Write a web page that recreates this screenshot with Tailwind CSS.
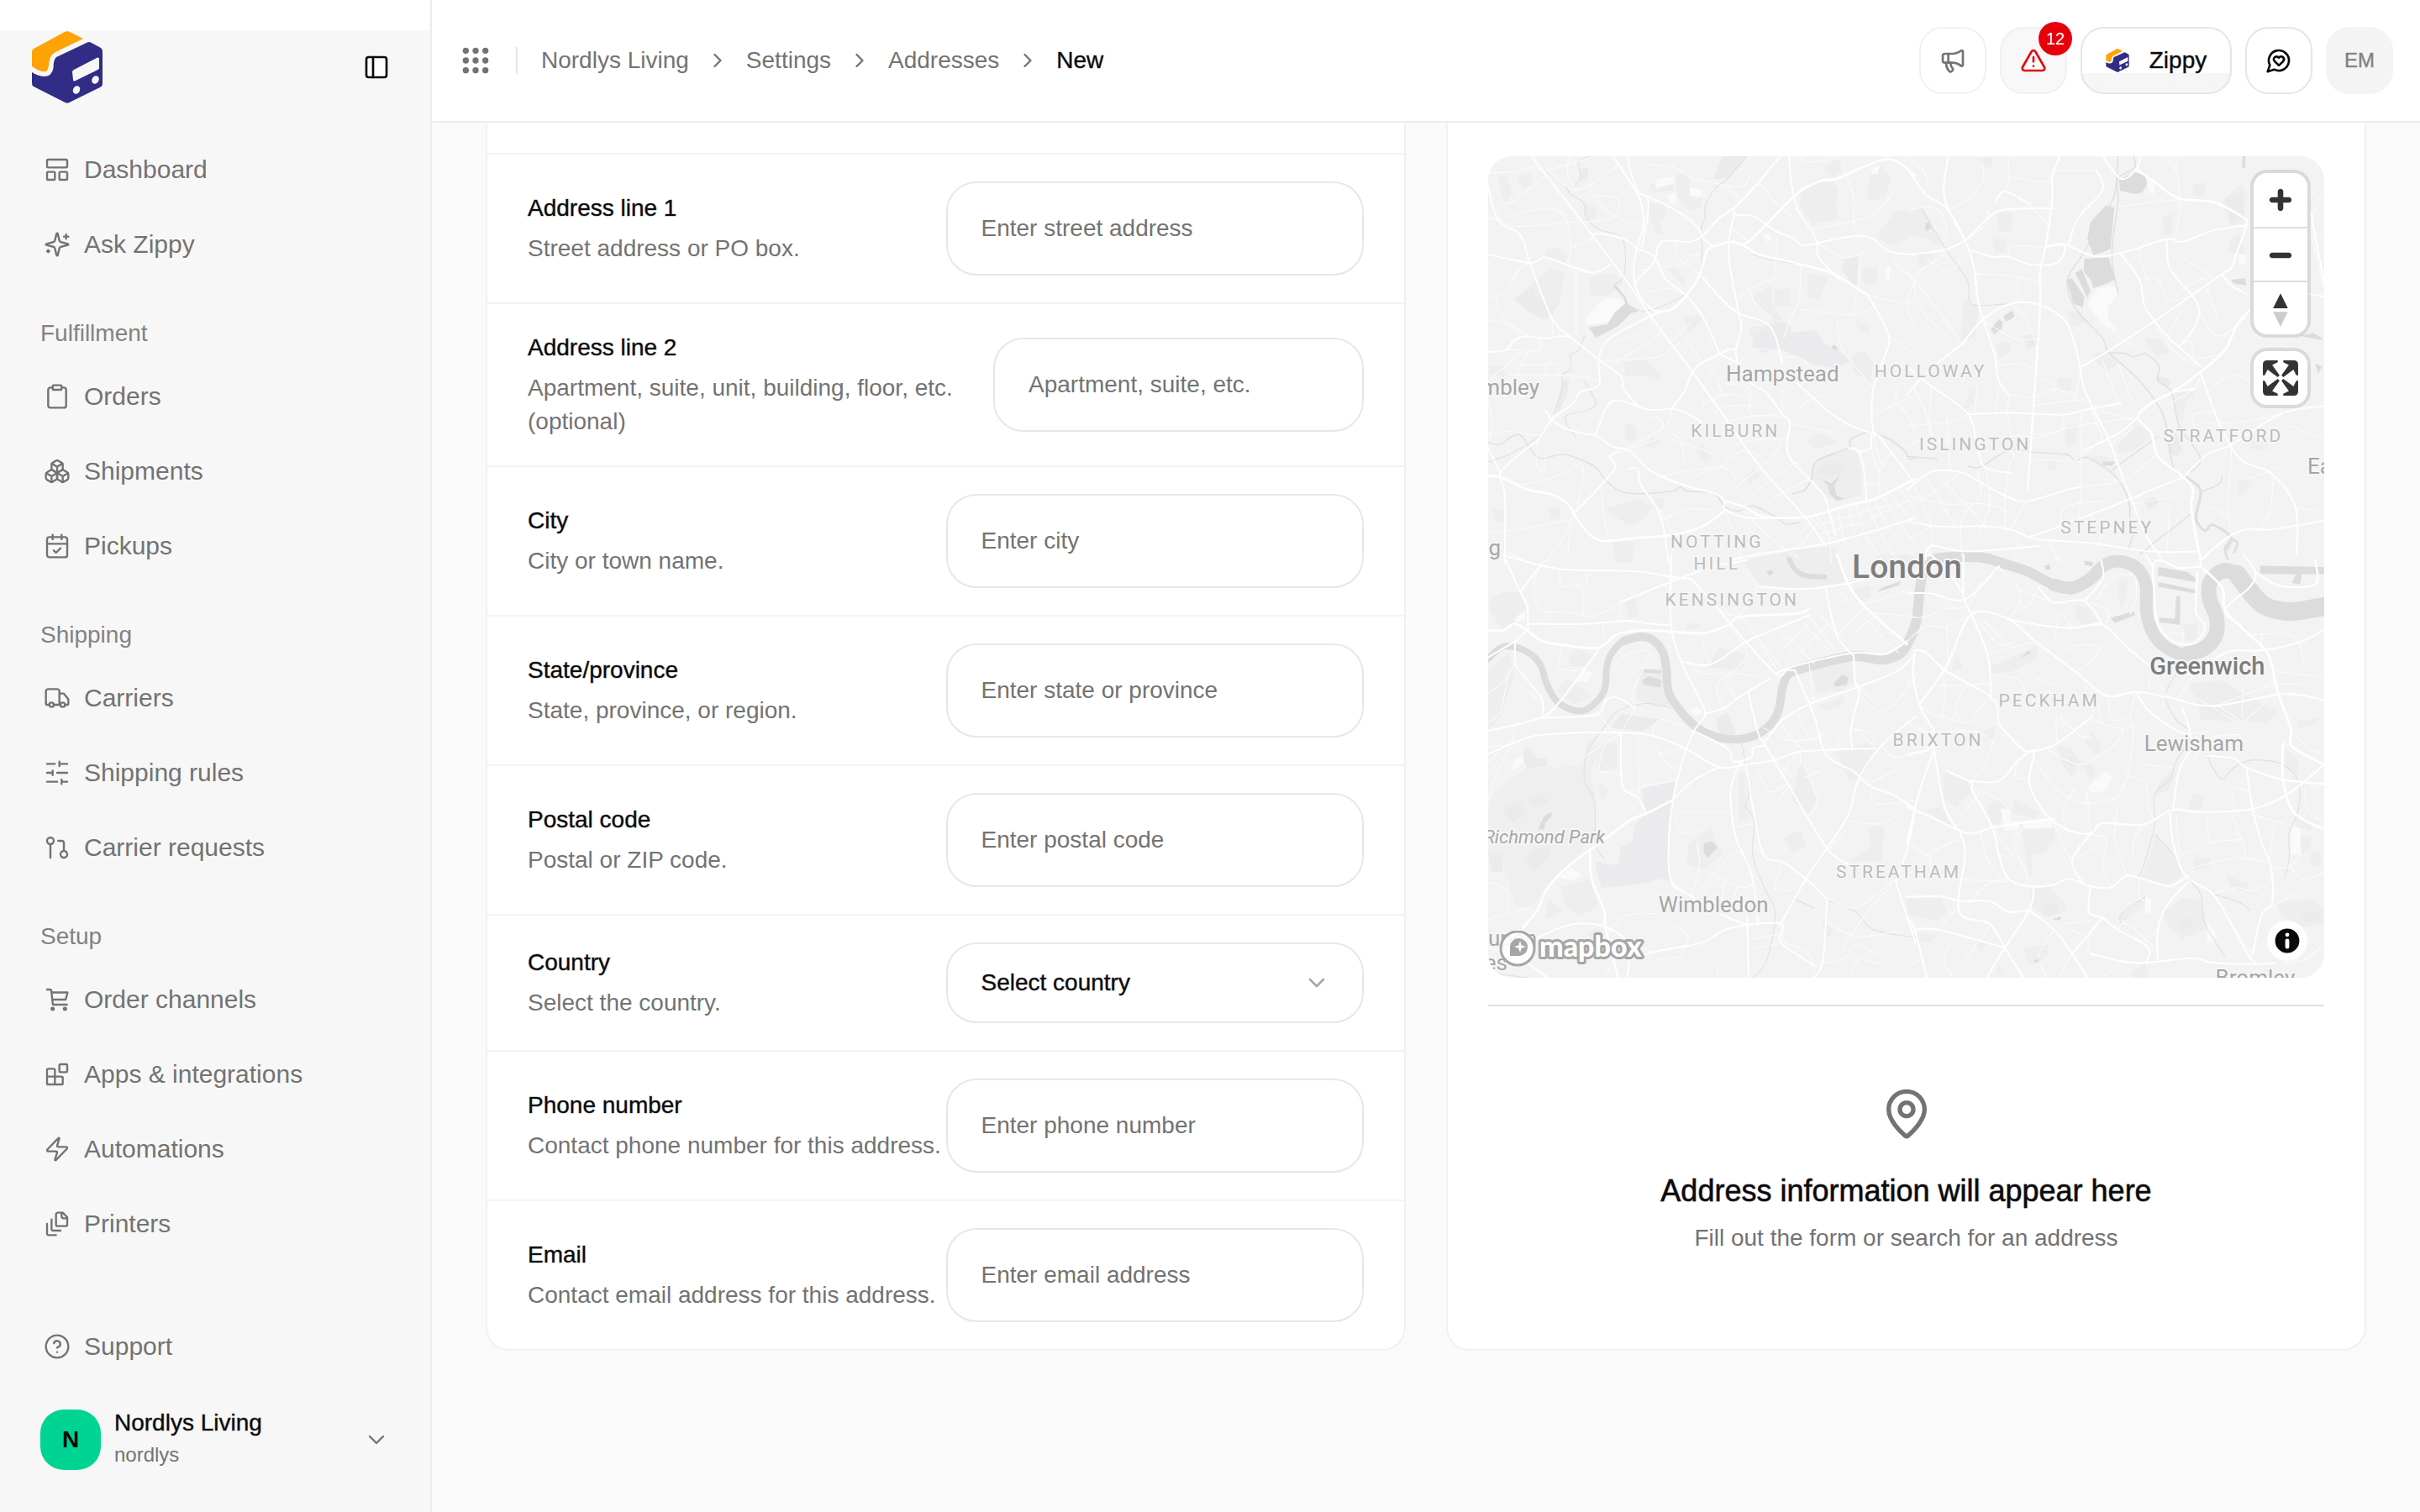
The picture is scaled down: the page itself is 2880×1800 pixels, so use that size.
<!DOCTYPE html>
<html lang="en">
<head>
<meta charset="utf-8">
<meta name="viewport" content="width=device-width, initial-scale=1">
<title>New address</title>
<script src="https://cdn.jsdelivr.net/npm/@tailwindcss/browser@4"></script>
</head>
<body class="flex h-screen overflow-hidden bg-[#fafafa] font-['Liberation_Sans',Arial,sans-serif] text-[28px] leading-10 text-[#737373]">

<svg class="hidden">
  <symbol id="logo" viewBox="0 0 84 86">
    <path fill="#ffa305" d="M3 20.500 39 1Q42-.5 45 1L61 9 28 25Q21 29 20.500 37L20 41Q19 50 12 48 5 46 0 42V25Q0 22 3 20.500Z"/>
    <path fill="#312c85" d="M29 31 66 13.500Q68 12.500 70 13.500L82 20Q84 21.500 84 24V63Q84 65.500 82 66.500L44 85.300Q42 86 40 85.300L2 66Q0 65 0 62V49Q7 53.500 14 54 24 54 25.500 44 25.500 34 29 31Z"/>
    <path fill="#f7f7f7" d="M48 48.500Q48 47 50 46L78 31.500Q80 31 80 33V44Q80 45 78.500 46L51 59.500Q49 60 49 58Z"/>
    <ellipse cx="53" cy="70" rx="4" ry="5" transform="rotate(30 53 70)" fill="#f7f7f7"/>
    <ellipse cx="75.500" cy="58" rx="4" ry="5" transform="rotate(30 75.500 58)" fill="#f7f7f7"/>
  </symbol>
</svg>

<aside class="flex w-[514px] shrink-0 flex-col border-r-2 border-[#ececec] bg-[#f7f7f7]">
  <div class="h-9 shrink-0 bg-white"></div>
  <div class="flex h-22 shrink-0 items-center justify-between pr-12 pl-[38px]">
    <a href="#" aria-label="Home"><svg class="h-[86px] w-[84px]"><use href="#logo"/></svg></a>
    <button type="button" aria-label="Toggle sidebar" class="text-[#0a0a0a]">
      <svg class="size-8" viewBox="0 0 24 24" fill="none" stroke="currentColor" stroke-width="2" stroke-linecap="round" stroke-linejoin="round"><rect width="18" height="18" x="3" y="3" rx="2" fill="#fff"/><path d="M9 3v18"/></svg>
    </button>
  </div>

  <nav class="mt-[38px] flex flex-col gap-[31px] px-8 text-[30px]">
    <div class="flex flex-col gap-[9px]">
      <a href="#" class="flex h-20 items-center gap-4 px-5"><svg class="size-8" viewBox="0 0 24 24" fill="none" stroke="currentColor" stroke-width="1.8" stroke-linecap="round" stroke-linejoin="round"><rect width="18" height="7" x="3" y="3" rx="1"/><rect width="7" height="7" x="3" y="14" rx="1"/><rect width="7" height="7" x="14" y="14" rx="1"/></svg>Dashboard</a>
      <a href="#" class="flex h-20 items-center gap-4 px-5"><svg class="size-8" viewBox="0 0 24 24" fill="none" stroke="currentColor" stroke-width="1.8" stroke-linecap="round" stroke-linejoin="round"><path d="M9.937 15.500A2 2 0 0 0 8.500 14.063l-6.135-1.582a.5.5 0 0 1 0-.962L8.500 9.936A2 2 0 0 0 9.937 8.500l1.582-6.135a.5.5 0 0 1 .963 0L14.063 8.500A2 2 0 0 0 15.500 9.937l6.135 1.581a.5.5 0 0 1 0 .964L15.500 14.063a2 2 0 0 0-1.437 1.437l-1.582 6.135a.5.5 0 0 1-.963 0z"/><path d="M20 3v4M22 5h-4M4 17v2M5 18H3"/></svg>Ask Zippy</a>
    </div>
    <div class="flex flex-col gap-[9px]">
      <h2 class="-mb-[9px] flex h-[70px] items-center pl-4 text-[28px] text-[#828282]">Fulfillment</h2>
      <a href="#" class="flex h-20 items-center gap-4 px-5"><svg class="size-8" viewBox="0 0 24 24" fill="none" stroke="currentColor" stroke-width="1.8" stroke-linecap="round" stroke-linejoin="round"><rect width="8" height="4" x="8" y="2" rx="1"/><path d="M16 4h2a2 2 0 0 1 2 2v14a2 2 0 0 1-2 2H6a2 2 0 0 1-2-2V6a2 2 0 0 1 2-2h2"/></svg>Orders</a>
      <a href="#" class="flex h-20 items-center gap-4 px-5"><svg class="size-8" viewBox="0 0 24 24" fill="none" stroke="currentColor" stroke-width="1.8" stroke-linecap="round" stroke-linejoin="round"><path d="M2.970 12.920A2 2 0 0 0 2 14.630v3.240a2 2 0 0 0 .970 1.710l3 1.800a2 2 0 0 0 2.060 0L12 19v-5.500l-5-3-4.030 2.420Z"/><path d="m7 16.500-4.740-2.850M7 16.500l5-3M7 16.500v5.170"/><path d="M12 13.500V19l3.970 2.380a2 2 0 0 0 2.060 0l3-1.800a2 2 0 0 0 .970-1.710v-3.240a2 2 0 0 0-.970-1.710L17 10.500l-5 3Z"/><path d="m17 16.500-5-3M17 16.500l4.740-2.850M17 16.500v5.170"/><path d="M7.970 4.420A2 2 0 0 0 7 6.130v4.370l5 3 5-3V6.130a2 2 0 0 0-.970-1.710l-3-1.800a2 2 0 0 0-2.060 0l-3 1.800Z"/><path d="M12 8 7.260 5.150M12 8l4.740-2.850M12 13.500V8"/></svg>Shipments</a>
      <a href="#" class="flex h-20 items-center gap-4 px-5"><svg class="size-8" viewBox="0 0 24 24" fill="none" stroke="currentColor" stroke-width="1.8" stroke-linecap="round" stroke-linejoin="round"><path d="M8 2v4M16 2v4"/><rect width="18" height="18" x="3" y="4" rx="2"/><path d="M3 10h18M9 16l2 2 4-4"/></svg>Pickups</a>
    </div>
    <div class="flex flex-col gap-[9px]">
      <h2 class="-mb-[9px] flex h-[70px] items-center pl-4 text-[28px] text-[#828282]">Shipping</h2>
      <a href="#" class="flex h-20 items-center gap-4 px-5"><svg class="size-8" viewBox="0 0 24 24" fill="none" stroke="currentColor" stroke-width="1.8" stroke-linecap="round" stroke-linejoin="round"><path d="M14 18V6a2 2 0 0 0-2-2H4a2 2 0 0 0-2 2v11a1 1 0 0 0 1 1h2M15 18H9M19 18h2a1 1 0 0 0 1-1v-3.650a1 1 0 0 0-.220-.624l-3.480-4.350A1 1 0 0 0 17.520 8H14"/><circle cx="17" cy="18" r="2"/><circle cx="7" cy="18" r="2"/></svg>Carriers</a>
      <a href="#" class="flex h-20 items-center gap-4 px-5"><svg class="size-8" viewBox="0 0 24 24" fill="none" stroke="currentColor" stroke-width="1.8" stroke-linecap="round" stroke-linejoin="round"><path d="M21 4h-7M10 4H3M21 12h-9M8 12H3M21 20h-5M12 20H3M14 2v4M8 10v4M16 18v4"/></svg>Shipping rules</a>
      <a href="#" class="flex h-20 items-center gap-4 px-5"><svg class="size-8" viewBox="0 0 24 24" fill="none" stroke="currentColor" stroke-width="1.8" stroke-linecap="round" stroke-linejoin="round"><circle cx="18" cy="18" r="3"/><circle cx="6" cy="6" r="3"/><path d="M13 6h3a2 2 0 0 1 2 2v7M6 9v12"/></svg>Carrier requests</a>
    </div>
    <div class="flex flex-col gap-[9px]">
      <h2 class="-mb-[9px] flex h-[70px] items-center pl-4 text-[28px] text-[#828282]">Setup</h2>
      <a href="#" class="flex h-20 items-center gap-4 px-5"><svg class="size-8" viewBox="0 0 24 24" fill="none" stroke="currentColor" stroke-width="1.8" stroke-linecap="round" stroke-linejoin="round"><path d="M3 3h2.600q1.100 0 1.200 1L8.200 16.500h12.600M7 5.600h14.300l-1.700 6.400H7.700"/><circle cx="8" cy="20.300" r="1" fill="currentColor"/><circle cx="19" cy="20.300" r="1" fill="currentColor"/></svg>Order channels</a>
      <a href="#" class="flex h-20 items-center gap-4 px-5"><svg class="size-8" viewBox="0 0 24 24" fill="none" stroke="currentColor" stroke-width="1.8" stroke-linecap="round" stroke-linejoin="round"><rect width="7" height="7" x="14" y="3" rx="1"/><path d="M10 21V8a1 1 0 0 0-1-1H4a1 1 0 0 0-1 1v12a1 1 0 0 0 1 1h12a1 1 0 0 0 1-1v-5a1 1 0 0 0-1-1H3"/></svg>Apps &amp; integrations</a>
      <a href="#" class="flex h-20 items-center gap-4 px-5"><svg class="size-8" viewBox="0 0 24 24" fill="none" stroke="currentColor" stroke-width="1.8" stroke-linecap="round" stroke-linejoin="round"><path d="M4 14a1 1 0 0 1-.780-1.630l9.900-10.200a.5.5 0 0 1 .860.460l-1.920 6.020A1 1 0 0 0 13 10h7a1 1 0 0 1 .780 1.630l-9.900 10.200a.5.5 0 0 1-.860-.460l1.920-6.020A1 1 0 0 0 11 14z"/></svg>Automations</a>
      <a href="#" class="flex h-20 items-center gap-4 px-5"><svg class="size-8" viewBox="0 0 24 24" fill="none" stroke="currentColor" stroke-width="1.8" stroke-linecap="round" stroke-linejoin="round"><path d="M21 7h-3a2 2 0 0 1-2-2V2"/><path d="M21 6v6.500c0 .8-.7 1.500-1.500 1.500h-7c-.8 0-1.500-.7-1.500-1.500v-9c0-.8.7-1.500 1.500-1.500H17Z"/><path d="M7 8v8.800c0 .3.2.6.4.8.2.2.5.4.8.4H15M3 12v8.800c0 .3.2.6.4.8.2.2.5.4.8.4H11"/></svg>Printers</a>
    </div>
  </nav>

  <div class="mt-auto flex flex-col gap-[33px] pb-12">
    <a href="#" class="mx-8 flex h-20 items-center gap-4 px-5 text-[30px]"><svg class="size-8" viewBox="0 0 24 24" fill="none" stroke="currentColor" stroke-width="1.8" stroke-linecap="round" stroke-linejoin="round"><circle cx="12" cy="12" r="10"/><path d="M9.090 9a3 3 0 0 1 5.830 1c0 2-3 3-3 3M12 17h.010"/></svg>Support</a>
    <button type="button" class="flex items-center gap-4 px-12 text-left">
      <span class="flex size-18 items-center justify-center rounded-[28px] bg-[#00d492] font-bold text-[#0a0a0a]">N</span>
      <span class="flex-1">
        <span class="block leading-9 text-[#0a0a0a] [-webkit-text-stroke:1px_rgb(10_10_10/0.4)]">Nordlys Living</span>
        <span class="block text-2xl leading-10">nordlys</span>
      </span>
      <svg class="size-8" viewBox="0 0 24 24" fill="none" stroke="currentColor" stroke-width="1.8" stroke-linecap="round" stroke-linejoin="round"><path d="m6 9 6 6 6-6"/></svg>
    </button>
  </div>
</aside>

<div class="flex min-w-0 flex-1 flex-col">
  <header class="flex h-[146px] shrink-0 items-center justify-between border-b-2 border-[#ececec] bg-white pr-8 pl-8">
    <div class="flex items-center">
      <button type="button" aria-label="Apps"><svg class="size-10" viewBox="0 0 24 24" fill="currentColor"><circle cx="5" cy="5" r="2.200"/><circle cx="12" cy="5" r="2.200"/><circle cx="19" cy="5" r="2.200"/><circle cx="5" cy="12" r="2.200"/><circle cx="12" cy="12" r="2.200"/><circle cx="19" cy="12" r="2.200"/><circle cx="5" cy="19" r="2.200"/><circle cx="12" cy="19" r="2.200"/><circle cx="19" cy="19" r="2.200"/></svg></button>
      <div class="mx-7 h-8 w-[2px] bg-[#e5e5e5]"></div>
      <nav aria-label="Breadcrumb" class="flex items-center gap-5">
        <a href="#">Nordlys Living</a>
        <svg class="size-7" viewBox="0 0 24 24" fill="none" stroke="currentColor" stroke-width="2" stroke-linecap="round" stroke-linejoin="round"><path d="m9 18 6-6-6-6"/></svg>
        <a href="#">Settings</a>
        <svg class="size-7" viewBox="0 0 24 24" fill="none" stroke="currentColor" stroke-width="2" stroke-linecap="round" stroke-linejoin="round"><path d="m9 18 6-6-6-6"/></svg>
        <a href="#">Addresses</a>
        <svg class="size-7" viewBox="0 0 24 24" fill="none" stroke="currentColor" stroke-width="2" stroke-linecap="round" stroke-linejoin="round"><path d="m9 18 6-6-6-6"/></svg>
        <span aria-current="page" class="text-[#0a0a0a] [-webkit-text-stroke:1px_rgb(10_10_10/0.4)]">New</span>
      </nav>
    </div>
    <div class="flex items-center gap-4">
      <button type="button" aria-label="Announcements" class="flex size-20 items-center justify-center rounded-[28px] border-2 border-[#f1f1f1]"><svg class="size-8" viewBox="0 0 24 24" fill="none" stroke="currentColor" stroke-width="2" stroke-linecap="round" stroke-linejoin="round"><path d="M11 6a13 13 0 0 0 8.400-2.800A1 1 0 0 1 21 4v12a1 1 0 0 1-1.600.8A13 13 0 0 0 11 14H5a2 2 0 0 1-2-2V8a2 2 0 0 1 2-2z"/><path d="M6 14a12 12 0 0 0 2.400 7.200 2 2 0 0 0 3.200-2.400A8 8 0 0 1 10 14M8 6v8"/></svg></button>
      <button type="button" aria-label="Alerts" class="relative flex size-20 items-center justify-center rounded-[28px] border-2 border-[#f1f1f1] bg-[#f8f8f8] text-[#e7000b]">
        <svg class="size-8" viewBox="0 0 24 24" fill="none" stroke="currentColor" stroke-width="2" stroke-linecap="round" stroke-linejoin="round"><path fill="#fff" d="m21.730 18-8-14a2 2 0 0 0-3.480 0l-8 14A2 2 0 0 0 4 21h16a2 2 0 0 0 1.730-3"/><path d="M12 9v4M12 17h.010"/></svg>
        <span class="absolute -top-2 -right-2 flex size-10 items-center justify-center rounded-full bg-[#e7000b] text-xl text-white">12</span>
      </button>
      <button type="button" class="flex h-20 w-[180px] items-center justify-center gap-6 rounded-[28px] border-2 border-[#e5e5ea] bg-linear-to-b from-white from-70% to-[#f6f6f6] to-70% text-[#0a0a0a]"><svg class="size-7"><use href="#logo"/></svg><span class="[-webkit-text-stroke:1px_rgb(10_10_10/0.4)]">Zippy</span></button>
      <button type="button" aria-label="Feedback" class="flex size-20 items-center justify-center rounded-[28px] border-2 border-[#e5e5ea] text-[#0a0a0a]"><svg class="size-8" viewBox="0 0 24 24" fill="none" stroke="currentColor" stroke-width="2" stroke-linecap="round" stroke-linejoin="round"><path d="M7.900 20A9 9 0 1 0 4 16.100L2 22Z"/><path d="M15.800 9.200a2.500 2.500 0 0 0-3.500 0l-.3.4-.350-.3a2.420 2.420 0 1 0-3.200 3.600l3.600 3.500 3.600-3.500c1.200-1.200 1.100-2.700.2-3.700"/></svg></button>
      <button type="button" aria-label="Account" class="flex size-20 items-center justify-center rounded-[28px] bg-[#f4f4f4] text-2xl text-[#808080] [-webkit-text-stroke:1px_rgb(128_128_128/0.4)]">EM</button>
    </div>
  </header>

  <main class="grid grid-cols-2 items-stretch gap-12 px-16">
    <form class="flex flex-col rounded-b-[28px] border-2 border-t-0 border-[#f1f1f1] bg-white pt-9">
      <div class="flex items-center border-t-2 border-[#f3f3f3] px-12 py-8">
        <div class="flex w-1/2 flex-col gap-2"><label for="line1" class="text-[#0a0a0a] [-webkit-text-stroke:1px_rgb(10_10_10/0.4)]">Address line 1</label><p>Street address or PO box.</p></div>
        <input id="line1" placeholder="Enter street address" class="h-28 w-1/2 rounded-[36px] border-2 border-[#e7e7eb] px-10 placeholder:text-[#737373]">
      </div>
      <div class="flex items-center justify-between border-t-2 border-[#f3f3f3] px-12 py-8">
        <div class="flex flex-1 flex-col gap-2"><label for="line2" class="text-[#0a0a0a] [-webkit-text-stroke:1px_rgb(10_10_10/0.4)]">Address line 2</label><p>Apartment, suite, unit, building, floor, etc. (optional)</p></div>
        <input id="line2" placeholder="Apartment, suite, etc." class="h-28 w-[441px] rounded-[36px] border-2 border-[#e7e7eb] px-10 placeholder:text-[#737373]">
      </div>
      <div class="flex items-center border-t-2 border-[#f3f3f3] px-12 py-8">
        <div class="flex w-1/2 flex-col gap-2"><label for="city" class="text-[#0a0a0a] [-webkit-text-stroke:1px_rgb(10_10_10/0.4)]">City</label><p>City or town name.</p></div>
        <input id="city" placeholder="Enter city" class="h-28 w-1/2 rounded-[36px] border-2 border-[#e7e7eb] px-10 placeholder:text-[#737373]">
      </div>
      <div class="flex items-center border-t-2 border-[#f3f3f3] px-12 py-8">
        <div class="flex w-1/2 flex-col gap-2"><label for="state" class="text-[#0a0a0a] [-webkit-text-stroke:1px_rgb(10_10_10/0.4)]">State/province</label><p>State, province, or region.</p></div>
        <input id="state" placeholder="Enter state or province" class="h-28 w-1/2 rounded-[36px] border-2 border-[#e7e7eb] px-10 placeholder:text-[#737373]">
      </div>
      <div class="flex items-center border-t-2 border-[#f3f3f3] px-12 py-8">
        <div class="flex w-1/2 flex-col gap-2"><label for="postal" class="text-[#0a0a0a] [-webkit-text-stroke:1px_rgb(10_10_10/0.4)]">Postal code</label><p>Postal or ZIP code.</p></div>
        <input id="postal" placeholder="Enter postal code" class="h-28 w-1/2 rounded-[36px] border-2 border-[#e7e7eb] px-10 placeholder:text-[#737373]">
      </div>
      <div class="flex items-center border-t-2 border-[#f3f3f3] px-12 py-8">
        <div class="flex w-1/2 flex-col gap-2"><label for="country" class="text-[#0a0a0a] [-webkit-text-stroke:1px_rgb(10_10_10/0.4)]">Country</label><p>Select the country.</p></div>
        <div class="relative w-1/2">
          <select id="country" class="h-24 w-full appearance-none rounded-[36px] border-2 border-[#e7e7eb] bg-white px-10 text-[#0a0a0a] [-webkit-text-stroke:1px_rgb(10_10_10/0.4)]"><option>Select country</option></select>
          <svg class="pointer-events-none absolute top-8 right-10 size-8 text-[#a8a8a8]" viewBox="0 0 24 24" fill="none" stroke="currentColor" stroke-width="2" stroke-linecap="round" stroke-linejoin="round"><path d="m6 9 6 6 6-6"/></svg>
        </div>
      </div>
      <div class="flex items-center border-t-2 border-[#f3f3f3] px-12 py-8">
        <div class="flex w-1/2 flex-col gap-2"><label for="phone" class="text-[#0a0a0a] [-webkit-text-stroke:1px_rgb(10_10_10/0.4)]">Phone number</label><p>Contact phone number for this address.</p></div>
        <input id="phone" type="tel" placeholder="Enter phone number" class="h-28 w-1/2 rounded-[36px] border-2 border-[#e7e7eb] px-10 placeholder:text-[#737373]">
      </div>
      <div class="flex items-center border-t-2 border-[#f3f3f3] px-12 py-8">
        <div class="flex w-1/2 flex-col gap-2"><label for="email" class="text-[#0a0a0a] [-webkit-text-stroke:1px_rgb(10_10_10/0.4)]">Email</label><p>Contact email address for this address.</p></div>
        <input id="email" type="email" placeholder="Enter email address" class="h-28 w-1/2 rounded-[36px] border-2 border-[#e7e7eb] px-10 placeholder:text-[#737373]">
      </div>
    </form>

    <section class="flex flex-col gap-8 rounded-b-[28px] border-2 border-t-0 border-[#f1f1f1] bg-white px-12 pt-10">
      <div class="relative h-[978px] overflow-hidden rounded-[28px] bg-[#f3f3f3]">
        <svg class="size-full" viewBox="0 0 994 978" preserveAspectRatio="xMidYMid slice" role="img" aria-label="Map of London">
          <!-- parks and built-up blocks -->
          <g fill="#eeeeee">
            <g transform="translate(-12 -16) scale(.3333)">
              <path d="M72 112 100 120 122 180 100 215 82 175ZM145 120 185 108 195 150 160 165 143 145ZM610 215 665 225 670 260 645 280 660 325 640 330 610 270ZM700 120 745 110 760 160 800 200 790 235 745 240 710 190ZM610 150 690 135 700 170 630 180ZM1150 170 1180 145 1270 140 1285 170 1275 230 1290 275 1190 290 1150 230ZM1240 80 1290 60 1295 100 1275 125 1240 105ZM1400 110 1440 85 1475 125 1450 195 1400 210 1385 190ZM130 560 220 480 260 450 310 470 290 580 250 615 180 590ZM240 385 275 372 320 405 310 430 245 410ZM395 480 480 465 520 500 470 545 400 550ZM1180 470 1250 480 1215 565 1175 550ZM1055 525 1110 520 1115 580 1060 590ZM980 550 1045 510 1050 580 1085 630 1060 640 1010 600ZM730 610 760 625 790 618 800 635 750 682ZM680 455 705 445 740 490 735 515ZM960 660 1040 650 1050 700 980 710ZM520 785 590 772 650 820 645 845 590 830 525 835ZM1350 645 1400 650 1395 680 1360 670ZM1370 450 1425 445 1420 510 1370 500ZM1430 320 1490 245 1560 240 1560 320 1490 370 1425 345ZM525 1005 560 1010 570 1050 545 1072 525 1060ZM595 1080 620 1050 650 1065 630 1095ZM775 1095 800 1080 830 1130 805 1145ZM945 1190 985 1165 1010 1190 975 1218ZM450 1310 570 1270 625 1300 590 1345 540 1368ZM630 1265 665 1270 660 1310 625 1300ZM1170 1070 1210 1035 1290 1070 1210 1092ZM1195 1150 1220 1130 1320 1092 1355 1110 1368 1180 1365 1260 1290 1282 1230 1260 1195 1200ZM55 1310 90 1310 92 1350 60 1355ZM255 1305 290 1300 295 1340 262 1348ZM36 800 90 800 95 835 36 830ZM480 1425 555 1425 550 1500 490 1500ZM380 215 430 245 405 280 380 255ZM1330 760 1380 740 1410 790 1400 855 1340 820ZM905 1500 1130 1455 1270 1440 1290 1500Z"/>
            </g>
            <g transform="translate(498 -16) scale(.3635 .3333)">
              <path d="M235 55 280 50 278 90 240 85ZM0 250 50 235 90 310 110 370 60 340 0 330ZM295 250 345 250 340 320 300 320ZM280 345 325 345 325 390 285 395ZM935 150 975 143 972 195 935 190ZM835 265 870 255 865 330 840 330ZM185 560 235 590 225 690 175 715ZM290 725 330 710 345 745 300 770ZM600 760 660 740 690 790 650 820ZM780 700 830 700 860 750 820 765 785 730ZM490 840 540 840 535 885 500 885ZM205 885 225 880 220 930 185 960ZM525 1010 560 1005 550 1070 525 1090 515 1040ZM690 1080 750 1010 800 1030 790 1060 740 1100 690 1110ZM580 1120 650 1120 680 1150 640 1160ZM1125 1065 1175 1070 1185 1095 1125 1095ZM1085 1210 1110 1200 1130 1215 1100 1260 1080 1255ZM875 890 935 890 940 905 910 920 905 990 885 1000ZM465 1130 490 1135 490 1165 465 1170ZM1030 210 1090 150 1110 180 1100 290 1060 300ZM1060 340 1090 330 1105 400 1050 390ZM645 610 680 660 650 650ZM40 390 85 400 80 440 40 445ZM520 600 560 600 590 640 540 660Z"/>
            </g>
            <g transform="translate(-12 474) scale(.3333 .3444)">
              <path fill="#efefef" d="M60 820 165 740 365 730 375 700 395 640 450 670 400 740 415 830 420 960 330 1070 250 1140 200 1205 140 1222 90 1070 36 1040 36 880Z"/>
              <path d="M42 150 100 128 150 130 172 185 160 215 85 258 42 195ZM36 400 110 340 130 420 80 560 36 610ZM950 25 1260 0 1310 60 1300 98 1150 118 1000 108ZM1330 120 1400 110 1400 150 1350 160ZM1190 390 1335 365 1340 440 1300 470 1210 480ZM575 400 660 390 690 520 640 530 565 500ZM320 350 360 325 410 350 390 390 330 385ZM280 470 320 430 410 490 340 520ZM435 660 495 645 495 740 425 750ZM295 1150 400 1120 430 1210 370 1250 310 1220ZM750 1000 830 940 850 1000 880 1030 800 1090 745 1070ZM1140 740 1160 720 1210 840 1180 900 1120 850ZM1280 680 1400 650 1430 670 1360 780 1320 780ZM1090 980 1150 950 1170 1010 1120 1030ZM1390 940 1450 935 1440 1060 1320 1060 1400 1010ZM860 320 960 350 940 400 820 390ZM520 160 560 150 575 210 540 220ZM1220 520 1310 490 1300 520 1240 540ZM930 760 950 750 960 920 930 920ZM250 1190 310 1230 240 1260ZM430 780 470 820 440 850ZM740 240 790 235 790 260 740 260ZM1230 1250 1265 1300 1235 1340ZM390 1300 440 1290 460 1340 410 1340ZM1420 0 1560 0 1560 60 1440 80Z"/>
            </g>
            <g transform="translate(498 474) scale(.3635 .3571)">
              <path d="M270 375 425 305 425 350 340 390 275 400ZM120 725 200 760 210 790 160 845 120 810ZM160 330 185 380 145 390ZM545 170 590 175 620 220 590 250 555 210ZM690 90 720 80 720 130 700 180 690 140ZM580 625 605 590 640 640 620 665ZM490 640 530 640 570 690 540 740 505 700ZM570 700 600 695 620 730 600 755ZM920 820 945 795 970 810 965 850 925 850ZM260 840 300 815 330 830 300 900 275 890ZM350 815 440 860 420 880 340 860ZM370 900 480 890 485 940 455 990 410 1000 410 1080 395 1050ZM400 1120 460 1105 520 1160 520 1190 460 1210 405 1170ZM840 1190 900 1145 960 1150 975 1250 900 1280 850 1230ZM770 1070 815 935 860 990 905 1070 860 1098 790 1085ZM940 1010 990 1010 990 1045 940 1050ZM1040 1065 1120 1100 1110 1125 1060 1110ZM1210 1160 1330 1150 1364 1180 1364 1230 1290 1240 1220 1200ZM1285 940 1325 940 1320 980 1290 1000ZM1320 990 1355 990 1355 1035 1320 1035ZM1275 555 1345 545 1340 565 1285 580ZM920 430 1030 420 1110 470 1210 520 1180 560 1100 560 960 550 950 490ZM380 1310 460 1300 460 1340 400 1370ZM60 850 110 840 150 910 100 880ZM0 1145 110 1145 130 1190 100 1220 0 1200ZM15 1265 100 1265 80 1290 20 1290ZM220 1275 260 1300 240 1330ZM290 1400 300 1370 320 1400ZM735 1390 780 1360 790 1410 740 1410ZM690 1210 780 1140 790 1160 710 1220ZM250 590 300 565 290 610 255 630ZM900 230 950 230 950 280 915 290ZM820 770 870 710 880 730 850 790 815 800ZM1265 870 1335 890 1320 920 1280 910ZM1225 640 1280 680 1280 740 1240 710Z"/>
            </g>
          </g>
          <!-- woodland -->
          <g fill="#ebebee">
            <g transform="translate(-12 -16) scale(.3333)"><path d="M130 560 195 515 210 555 270 590 265 615 235 630 180 605ZM985 690 1060 640 1110 645 1120 680 1200 670 1240 720 1280 740 1335 780 1270 805 1190 790 1130 760 1070 735 1020 752 980 730ZM1295 445 1310 415 1358 405 1355 515 1330 500ZM1210 1155 1300 1140 1315 1170 1270 1190 1210 1180ZM840 130 870 50 960 48 890 130ZM365 95 395 90 390 130 360 140ZM300 850 325 845 320 890 290 960 275 960Z"/></g>
            <g transform="translate(498 -16) scale(.3635 .3333)"><path d="M378 690 420 685 425 720 395 740ZM775 1280 810 1268 825 1285 790 1312ZM820 830 865 850 855 870 820 855ZM850 1050 880 1030 900 1100 880 1120 855 1110ZM1040 200 1095 180 1100 270 1060 290Z"/></g>
            <g transform="translate(-12 474) scale(.3333 .3444)"><path d="M585 810 705 780 695 850 680 1000 688 1130 640 1120 600 1135 560 1140 440 1152 415 1060 500 1075 510 1010 550 990 560 930 600 895 590 850ZM95 870 160 850 170 890 130 925 95 900ZM180 855 220 830 255 850 240 865 190 865ZM165 1060 200 1020 255 1005 255 1040 200 1090ZM36 1030 90 1040 85 1100 50 1095ZM155 700 170 665 215 705 245 705 245 730 175 740ZM475 600 510 550 650 570 590 610ZM850 570 890 545 920 620 870 650ZM1030 60 1110 30 1050 60Z"/></g>
            <g transform="translate(498 474) scale(.3635 .3571)"><path d="M440 1165 490 1160 495 1190 450 1205ZM880 1215 930 1210 940 1245 890 1250ZM950 500 1030 510 1060 540 990 525ZM1290 1190 1350 1190 1355 1220 1300 1225ZM500 670 560 680 540 710Z"/></g>
          </g>
          <g fill="#fafafa">
            <g transform="translate(-12 -16) scale(.3333)"><path d="M390 620 445 560 500 555 525 575 470 640 390 650ZM640 130 700 120 705 145 630 165ZM675 185 708 180 705 215 680 220ZM755 160 800 170 795 195 755 190ZM1455 445 1475 440 1465 490 1450 495ZM1015 330 1040 322 1045 345 1030 358ZM1405 90 1432 85 1425 112 1405 115Z"/></g>
            <g transform="translate(498 -16) scale(.3635 .3333)"><path d="M785 130 810 145 810 185 790 180ZM590 580 625 520 680 510 690 540 655 590 660 630 690 680 640 650ZM1085 400 1110 400 1105 440 1085 430Z"/></g>
            <g transform="translate(-12 474) scale(.3333 .3444)"><path d="M125 225 165 195 170 225 140 235ZM115 750 130 710 160 695 165 720ZM350 440 375 400 410 410 390 440ZM290 1115 330 1085 375 1105 340 1125ZM750 540 780 525 800 545 780 560Z"/></g>
            <g transform="translate(498 474) scale(.3635 .3571)"><path d="M590 775 650 720 670 740 655 785 600 795ZM305 845 335 850 340 890 370 890 365 915 320 920ZM370 890 480 885 475 910 390 915ZM1255 905 1285 910 1290 1000 1255 1000ZM780 1135 800 1150 795 1190 775 1200ZM980 1220 1010 1260 1005 1295 980 1290Z"/></g>
          </g>
          <!-- water -->
          <g fill="#dcdcdc">
            <g transform="translate(-12 -16) scale(.3333)"><path d="M395 660 460 650 490 605 525 575 520 555 482 515 488 506 525 550 535 578 578 600 545 610 500 655 420 698ZM1225 1200 1260 1218 1292 1188 1270 1225 1280 1262 1310 1270 1280 1280 1255 1255 1250 1225ZM1260 728 1272 722 1286 738 1270 742Z"/></g>
            <g transform="translate(498 -16) scale(.3635 .3333)"><path d="M693 135 740 105 778 117 785 150 770 178 745 184 697 172ZM650 225 678 232 665 380 610 405 590 345 600 285ZM580 415 660 410 680 490 650 505 610 520 600 490 578 460ZM522 490 540 485 580 550 575 590 545 575ZM550 465 572 452 600 530 590 555ZM315 620 345 600 352 622 325 640ZM275 665 300 632 314 640 310 665 285 685ZM60 290 70 285 80 305 62 318ZM638 1140 680 1138 670 1155 640 1150ZM1060 490 1105 485 1110 510 1070 505ZM1097 48 1108 48 1105 92 1097 90ZM1285 690 1330 680 1360 700 1350 705ZM1335 790 1358 800 1345 825Z"/></g>
            <g transform="translate(-12 474) scale(.3333 .3444)"><path d="M590 395 655 402 650 412 590 408ZM585 435 610 420 655 435 650 460 590 450ZM213 950 235 905 262 890 262 905 240 925 235 950ZM1028 60 1045 52 1055 65 1040 75ZM1425 130 1440 115 1508 92 1505 105ZM1268 445 1300 415 1322 425 1315 450 1275 458ZM805 1000 830 990 855 1010 820 1048 805 1030Z"/></g>
            <g transform="translate(498 474) scale(.3635 .3571)"><path d="M822 42 915 58 945 80 942 92 820 70ZM822 92 945 118 942 130 822 108ZM880 140 894 140 893 235 825 225 825 211 876 214ZM1155 38 1364 42 1364 66 1292 66 1285 100 1258 95 1272 66 1155 65ZM665 212 740 190 746 202 680 228ZM448 38 465 32 470 50 455 52ZM580 22 610 25 605 40 580 35ZM370 345 400 320 405 330ZM412 1355 435 1342 435 1362ZM475 1215 505 1205 500 1220Z"/></g>
          </g>
          <g fill="none" stroke="#dcdcdc" stroke-linecap="round" stroke-linejoin="round">
            <polyline stroke-width="8" points="-6,602 0,598 15,585 31,584 51,593 63,607 70,629 83,650 105,660 121,656 138,636 141,608 146,593 161,577 181,572"/>
            <polyline stroke-width="10" points="161,577 181,572 196,576 208,591 212,612 215,639 231,663 250,681 271,691 295,694 318,689 335,677 345,660 351,629 361,613 388,605"/>
            <polyline stroke-width="12" points="361,613 388,605 435,595 468,599 488,593 498,581 509,553 514,510 520,488 533,479 560,477 589,478 616,486 643,495 672,510 694,514"/>
            <polyline stroke-width="15" points="672,510 694,514 716,503 731,488 749,482 771,490 782,510 783,545 792,570 807,585 829,593 851,586"/>
            <polyline stroke-width="18" points="829,593 851,586 865,570 866,549 858,528 858,508 872,494 891,498 905,517"/>
            <polyline stroke-width="22" points="891,498 905,517 923,535 949,542 971,540 1004,534"/>
            <polyline stroke-width="6" points="358,480 364,491 376,499 400,501"/>
          </g>
          <g fill="none" stroke="#dfdfe0" stroke-linejoin="round">
            <g transform="translate(-12 -16) scale(.3333)" stroke-width="3">
              <polyline stroke-width="4" points="36,1070 80,1078 120,1050 155,1048 215,1125 300,1113 360,1130 420,1160 465,1215 535,1252 690,1245 720,1230 750,1245 840,1252 880,1300 930,1315 980,1297 1060,1335 1100,1362 1150,1355"/>
              <polyline points="36,1140 75,1128 120,1110 180,1075 215,1050"/>
              <polyline stroke-width="5" points="1120,1255 1165,1240 1190,1200 1195,1160 1220,1130 1320,1090 1330,1060 1390,1035 1460,1055 1520,1100 1540,1130 1560,1125"/>
              <polyline points="235,95 310,155 330,185 375,215 385,265 430,310 515,345 522,470 490,505"/>
              <polyline points="400,50 360,70 365,120 345,160"/>
              <polyline points="960,48 890,130 845,165 810,230 810,270 795,310 800,380 795,460"/>
              <polyline points="380,690 360,740 330,760 330,810 300,830 300,880 270,970"/>
              <polyline points="580,605 630,595 720,555 740,540"/>
              <polyline points="980,400 1050,420 1125,432"/>
              <polyline points="380,850 420,930 390,955 315,975 320,1010 350,1050"/>
            </g>
            <g transform="translate(498 -16) scale(.3635 .3333)" stroke-width="4">
              <polyline points="690,48 680,180 640,270 575,400 525,490 550,590 640,700 660,750 760,850 840,980 870,1160 905,1190"/>
              <polyline stroke-width="9" points="905,1190 960,1240 945,1340 975,1385 1000,1365 1060,1410 1040,1460"/>
              <polyline points="740,48 745,90 690,130 690,210 670,400 690,540"/>
              <polyline points="660,752 710,752 740,765 780,755 825,800 820,850 865,890 890,1010 960,1130 905,1190"/>
              <polyline points="965,1245 1020,1220 1030,1190"/>
              <polyline points="200,1155 240,1158 330,1100 410,1105 525,1115 550,1140 590,1125 680,1190 725,1280 728,1380"/>
              <polyline points="670,1170 820,1050"/><polyline points="740,1400 725,1450"/>
              <polyline points="760,1470 935,1320"/>
              <polyline stroke-width="3" points="50,240 120,370 160,430 200,500 205,570 240,582 345,575"/>
              <polyline points="0,1120 50,1125 100,1130"/>
              <polyline stroke-width="8" points="1050,1490 1040,1450 1060,1420 1080,1430 1070,1465"/>
            </g>
            <g transform="translate(-12 474) scale(.3333 .3444)" stroke-width="3">
              <polyline points="940,650 950,700 965,830 955,870 985,920 980,1040 1020,1150 1060,1240 1030,1400 980,1463"/>
              <polyline points="690,530 600,515 500,540 440,610 390,680 380,780 415,850 420,1000 450,1050"/>
              <polyline points="1130,1190 1200,1222"/><polyline points="1245,1195 1340,1230 1400,1290 1470,1310 1560,1322"/>
              <polyline points="36,1445 120,1455 190,1463"/>
            </g>
            <g transform="translate(498 474) scale(.3635 .3571)" stroke-width="3">
              <polyline points="880,400 845,470 880,550 930,600 880,690 860,750 810,800 810,900 785,1000 760,1075"/>
              <polyline points="810,930 870,1000 910,1070 960,1130 975,1230 1040,1340"/>
              <polyline points="980,665 1000,710 1030,748 1070,710 1130,685 1230,700 1280,760 1280,850 1250,930 1250,1010 1235,1080"/>
              <polyline points="1000,1130 1090,1160 1120,1185"/><polyline points="780,1140 700,1200 705,1240"/>
            </g>
          </g>
          <!-- side streets -->
          <g fill="none" stroke="#fcfcfc" stroke-linejoin="round">
            <g transform="translate(-12 -16) scale(.3333)" stroke-width="3">
              <polyline points="36,108 130,105 200,85 245,100 400,55"/><polyline points="245,100 350,170 460,110 500,80"/><polyline points="325,48 320,110 350,170"/>
              <polyline points="36,270 75,275 180,245 270,235 320,265"/><polyline points="75,275 75,230 130,210 150,190 240,120"/><polyline points="75,275 140,300 320,285 375,285"/>
              <polyline points="280,235 320,290 330,380 320,430"/><polyline points="400,145 410,190 490,265 600,300"/><polyline points="375,285 490,265 495,200 410,190"/>
              <polyline points="410,340 330,380"/><polyline points="180,430 130,470 110,520 70,550 36,555"/><polyline points="70,550 75,600 150,690"/>
              <polyline points="350,455 350,690"/><polyline points="36,640 70,635 130,660 180,692"/><polyline points="265,630 265,692"/>
              <polyline points="150,450 120,500"/><polyline points="180,750 150,800 145,850 200,930"/><polyline points="100,740 215,740 220,700"/><polyline points="36,870 60,830 110,790 130,760 190,745"/>
              <polyline points="110,830 260,830 370,835 430,850"/><polyline points="150,795 235,795 240,830"/><polyline points="235,790 280,790 285,830"/>
              <polyline points="430,780 520,775 640,765 720,715"/><polyline points="470,800 530,760 640,690 660,650"/><polyline points="490,710 590,680 630,640"/>
              <polyline points="585,540 680,520 740,545"/><polyline points="580,455 720,435 790,400"/><polyline points="705,355 715,410 790,470"/><polyline points="735,405 790,400"/>
              <polyline points="895,300 960,350"/><polyline points="790,740 840,700"/><polyline points="680,720 760,640"/><polyline points="740,700 800,785 850,840 870,900"/>
              <polyline points="940,210 1000,150 1060,215 1130,270"/><polyline points="880,150 940,210"/><polyline points="780,130 930,160 970,120"/><polyline points="600,80 700,90 790,145"/>
              <polyline points="1130,48 1190,70 1290,60 1310,110 1340,200 1340,290 1370,350"/><polyline points="1130,190 1180,150 1290,130"/><polyline points="1190,310 1340,280 1420,250 1480,180"/>
              <polyline points="1070,340 1060,440 1065,480"/><polyline points="1210,360 1300,410 1360,400 1400,370"/><polyline points="1150,440 1145,560 1110,640 1090,700"/><polyline points="1360,400 1355,520 1335,615"/>
              <polyline points="930,550 970,520 1065,480"/><polyline points="970,520 985,570 1050,630"/><polyline points="1150,595 1335,615 1430,580"/><polyline points="1390,545 1500,570 1560,570"/>
              <polyline points="1280,640 1300,740 1380,840 1410,880"/><polyline points="1465,690 1560,760"/><polyline points="1560,490 1530,580 1560,660"/><polyline points="1480,420 1560,500"/>
              <polyline points="930,790 980,740 1050,745 1085,770"/><polyline points="1085,770 1140,765 1180,790"/><polyline points="880,860 970,880 970,970 1070,970"/><polyline points="810,960 810,930 890,900 970,910"/>
              <polyline points="840,970 880,940 980,940"/><polyline points="870,1000 990,975 1085,980"/><polyline points="1085,880 1085,970"/><polyline points="1140,960 1180,920 1255,900"/><polyline points="1110,1000 1250,1030 1310,1000"/>
              <polyline points="920,1080 1000,1060 1110,1060"/><polyline points="870,1155 940,1100 1010,1120"/><polyline points="750,1200 870,1160 920,1200"/><polyline points="650,1190 770,1170 870,1155"/><polyline points="920,1230 1050,1120 1080,1060"/>
              <polyline points="960,1270 1120,1150 1150,1160"/><polyline points="1050,1270 1180,1200"/><polyline points="690,1040 720,1060 740,1150"/><polyline points="690,1060 840,1110"/><polyline points="540,1090 670,1010 690,950"/>
              <polyline points="580,1000 620,980 660,1000 650,1040"/><polyline points="470,1120 640,1060"/><polyline points="370,1140 375,1200 350,1320"/><polyline points="215,1060 210,1160 240,1160 240,1110"/><polyline points="90,1190 150,1220 270,1195 370,1140"/>
              <polyline points="440,1230 450,1340 465,1420"/><polyline points="650,1350 740,1310 830,1310"/><polyline points="650,1310 690,1390"/><polyline points="240,1500 300,1420 345,1330"/><polyline points="36,1390 110,1385 260,1360 340,1345"/>
              <polyline points="100,1460 180,1500"/><polyline points="330,1360 320,1470"/><polyline points="880,1320 930,1430 940,1500"/><polyline points="940,1300 1000,1370 1080,1440 1140,1480"/>
              <polyline points="1180,1330 1280,1430"/><polyline points="1200,1320 1250,1400 1260,1500"/><polyline points="1280,1300 1310,1440"/><polyline points="1320,1290 1350,1430"/><polyline points="1350,1290 1380,1400 1450,1500"/><polyline points="1380,1280 1450,1420 1500,1500"/><polyline points="1410,1270 1480,1400 1560,1480"/><polyline points="1440,1260 1520,1380 1560,1430"/><polyline points="1470,1250 1560,1370"/><polyline points="1500,1230 1560,1310"/>
              <polyline points="1130,1420 1190,1350"/><polyline points="1150,1440 1210,1360"/><polyline points="1200,1370 1370,1320 1480,1290"/><polyline points="1210,1400 1390,1350"/><polyline points="1400,1340 1560,1270"/>
              <polyline points="1410,1050 1440,1150 1450,1110"/><polyline points="1430,1040 1480,1120"/><polyline points="1400,1080 1430,1170 1470,1110"/><polyline points="1430,1160 1430,1260"/><polyline points="1385,1220 1430,1220"/><polyline points="1480,880 1560,1030"/><polyline points="1500,860 1490,930 1530,960"/><polyline points="1415,970 1560,900"/>
              <polyline points="36,920 50,1000 40,1070"/><polyline points="36,1040 110,1030 170,1040 215,1045"/>
            </g>
            <g transform="translate(498 -16) scale(.3635 .3333)" stroke-width="3">
              <polyline points="240,48 250,130 200,200 140,240"/><polyline points="330,48 335,120 320,175"/><polyline points="335,120 430,140 475,135"/><polyline points="475,100 620,100"/><polyline points="0,50 60,110 60,180"/>
              <polyline points="400,220 460,290 475,300"/><polyline points="265,240 260,290 190,350"/><polyline points="0,250 50,230 110,250 130,330 90,300"/><polyline points="60,410 130,460 200,400"/><polyline points="0,460 60,540 130,640 180,720"/>
              <polyline points="115,385 110,410 40,460 25,520 50,600 140,700"/><polyline points="330,408 350,370 450,375"/><polyline points="220,470 340,475 430,500"/><polyline points="360,480 365,570"/><polyline points="230,620 350,700 430,700"/>
              <polyline points="340,575 400,650 430,760"/><polyline points="285,800 360,790 430,810"/><polyline points="300,880 290,960"/><polyline points="335,900 410,910 480,880 560,910"/><polyline points="335,900 330,960 340,1050 350,1130"/>
              <polyline points="410,940 545,920 600,920"/><polyline points="545,920 570,820"/><polyline points="430,840 480,860 480,900"/><polyline points="510,970 500,1030 420,1040"/><polyline points="410,1060 560,1010 640,1000 740,980"/>
              <polyline points="600,940 620,1000 640,1060"/><polyline points="640,780 690,930"/><polyline points="690,790 740,930"/><polyline points="640,960 740,990"/><polyline points="400,1130 570,1140"/><polyline points="570,960 570,1200 560,1380"/>
              <polyline points="640,1060 570,1120"/><polyline points="660,1080 740,1020"/><polyline points="640,1200 700,1210"/><polyline points="560,1230 640,1220 720,1200 820,1110"/><polyline points="740,1290 900,1260"/><polyline points="600,1330 640,1380 620,1440"/>
              <polyline points="230,870 220,960"/><polyline points="80,870 75,1000 90,1080"/><polyline points="0,1010 140,1000 200,970"/><polyline points="0,1090 50,1060 150,1070"/><polyline points="20,870 60,960 80,1060"/><polyline points="130,980 140,1170"/>
              <polyline points="240,1080 330,1050 420,1050"/><polyline points="340,1130 320,1260"/><polyline points="230,1170 240,1260 180,1340 180,1480"/><polyline points="260,1170 270,1300 230,1400"/><polyline points="0,1300 100,1240 170,1180"/><polyline points="20,1220 80,1370 70,1480"/>
              <polyline points="60,1190 130,1320 160,1380"/><polyline points="100,1190 180,1280 260,1370"/><polyline points="0,1260 130,1290 260,1290 340,1320"/><polyline points="0,1420 80,1370"/><polyline points="320,1260 320,1390"/><polyline points="340,1380 390,1280"/><polyline points="350,1480 370,1390"/><polyline points="460,1420 500,1490"/><polyline points="500,1370 520,1300 640,1280"/>
              <polyline points="690,230 830,210 890,205"/><polyline points="830,50 880,100 890,200 890,260 875,350"/><polyline points="880,48 880,100"/><polyline points="780,350 760,400 790,500"/><polyline points="880,540 960,490 1040,480"/><polyline points="760,490 820,490 850,560 910,555"/>
              <polyline points="950,580 1010,690 1100,640"/><polyline points="980,520 1020,640"/><polyline points="900,410 1000,480"/><polyline points="850,690 900,600"/><polyline points="800,620 870,740 950,800"/><polyline points="900,720 930,710 940,770 1010,760"/>
              <polyline points="690,690 760,740"/><polyline points="860,930 940,880 960,830"/><polyline points="940,1010 940,970 1000,960"/><polyline points="960,1000 1020,1010 1060,1080 1050,1300 1060,1390"/><polyline points="1020,1000 1090,1000 1220,970"/>
              <polyline points="1000,870 1060,830 1120,850 1220,880"/><polyline points="1220,740 1220,970"/><polyline points="1220,720 1330,800"/><polyline points="1040,690 1110,620"/><polyline points="1195,1180 1190,1300 1150,1390"/><polyline points="1120,1200 1220,1160"/>
              <polyline points="980,1300 1050,1330"/><polyline points="860,1300 850,1460"/><polyline points="1270,1300 1350,1320"/><polyline points="1250,1010 1364,1060"/><polyline points="1310,170 1364,210"/><polyline points="1320,300 1340,420 1364,520"/><polyline points="1340,230 1320,300 1364,340"/>
            </g>
            <g transform="translate(-12 474) scale(.3333 .3444)" stroke-width="3">
              <polyline points="290,50 300,110 370,110 380,210 450,200 510,165"/><polyline points="230,30 200,100 220,190 320,200 380,210"/><polyline points="390,110 385,60"/><polyline points="445,240 450,300"/><polyline points="510,165 500,230"/><polyline points="300,310 290,390 370,395 430,330"/>
              <polyline points="36,480 90,440 130,380"/><polyline points="36,580 80,540 110,400"/><polyline points="120,660 130,590"/><polyline points="180,470 210,500 230,480"/><polyline points="430,550 470,600 510,615"/><polyline points="560,530 520,600"/><polyline points="560,530 555,470 610,340 520,350 480,400"/>
              <polyline points="430,750 515,760"/><polyline points="430,750 450,660 510,620"/><polyline points="570,620 575,830"/><polyline points="440,660 380,700"/><polyline points="520,830 600,800 705,780"/><polyline points="36,850 60,770 100,690 110,660 36,665"/><polyline points="36,720 90,660"/>
              <polyline points="620,625 650,570 750,600"/><polyline points="740,670 640,690"/><polyline points="630,660 670,720 710,740"/><polyline points="720,890 900,890"/><polyline points="700,900 730,960 800,950"/><polyline points="920,940 980,930"/><polyline points="780,990 790,1080 760,1180"/>
              <polyline points="800,1180 850,1120 940,1150 980,1140"/><polyline points="800,1150 900,1040 940,1030"/><polyline points="860,1240 880,1130"/><polyline points="930,1140 890,1240"/><polyline points="690,1130 780,1200"/><polyline points="1020,1040 980,1000"/>
              <polyline points="1090,1060 1060,1150 1120,1160"/><polyline points="1000,750 1040,820 1110,790"/><polyline points="1080,770 1140,680 1150,720"/><polyline points="1050,700 1120,770"/><polyline points="1165,770 1240,740"/><polyline points="1180,900 1210,850 1160,720"/><polyline points="1110,800 1070,850"/>
              <polyline points="1020,600 1100,640 1180,640 1240,620"/><polyline points="1140,550 1180,640"/><polyline points="1080,590 1160,680"/><polyline points="1330,600 1410,620 1400,660"/><polyline points="1230,680 1270,680 1290,640"/><polyline points="1440,660 1480,700 1560,690"/>
              <polyline points="1400,790 1500,740"/><polyline points="1400,810 1420,860 1560,850"/><polyline points="1320,920 1440,930 1500,890"/><polyline points="1250,1020 1300,960"/><polyline points="1250,1190 1350,1220 1480,1130 1560,1090"/><polyline points="1240,1270 1360,1320 1500,1300"/>
              <polyline points="1300,1360 1400,1220 1480,1140"/><polyline points="1210,1410 1300,1400 1350,1350 1420,1380"/><polyline points="1330,1463 1360,1400 1450,1420"/><polyline points="1090,1340 1180,1380 1200,1463"/><polyline points="970,1330 1080,1310"/><polyline points="970,1360 1080,1340 1080,1280"/>
              <polyline points="440,1340 520,1250 640,1240"/><polyline points="470,1330 620,1370"/><polyline points="500,1380 450,1463"/><polyline points="720,1390 750,1320 700,1280"/><polyline points="640,1400 720,1390"/><polyline points="860,1420 850,1463"/><polyline points="36,1130 100,1160 110,1230"/><polyline points="36,1260 110,1240 190,1220"/><polyline points="36,1360 100,1360 160,1290"/>
              <polyline points="740,370 800,410 900,410 1000,420"/><polyline points="800,300 830,380"/><polyline points="900,410 960,340 890,240"/><polyline points="1080,390 960,240 910,180"/><polyline points="1060,390 1010,310"/><polyline points="880,440 920,500"/><polyline points="870,520 850,450 910,410"/><polyline points="960,470 1040,430"/>
              <polyline points="1120,350 1080,260"/><polyline points="1100,280 1200,380"/><polyline points="1160,240 1260,340"/><polyline points="1210,200 1310,300"/><polyline points="1150,340 1250,240"/><polyline points="1180,210 1280,340"/><polyline points="1090,320 1180,240"/><polyline points="1380,180 1300,260 1280,280"/><polyline points="1420,210 1340,270"/><polyline points="1380,220 1500,340"/><polyline points="1380,170 1450,150 1540,120"/><polyline points="1400,200 1560,215"/><polyline points="1280,150 1300,135 1315,155 1300,170 1285,155"/><polyline points="960,60 1000,110"/><polyline points="840,180 930,210 1000,110"/>
              <polyline points="1200,560 1180,500 1220,500"/><polyline points="1345,440 1400,500"/><polyline points="1360,490 1450,540 1560,430"/><polyline points="1420,670 1340,600"/><polyline points="1200,510 1190,450 1180,370"/>
            </g>
            <g transform="translate(498 474) scale(.3635 .3571)" stroke-width="3">
              <polyline points="0,210 50,210 110,190"/><polyline points="0,290 60,240 130,240 210,200"/><polyline points="120,180 200,170 240,90"/><polyline points="130,240 135,370"/><polyline points="90,130 160,180"/><polyline points="230,220 300,300 350,290"/><polyline points="250,220 320,290"/><polyline points="265,330 420,290"/><polyline points="360,90 370,160 330,215"/><polyline points="430,110 400,170 370,180"/><polyline points="300,40 360,110 480,160"/><polyline points="480,0 500,30"/>
              <polyline points="500,320 580,300 640,310"/><polyline points="480,300 500,200 540,245"/><polyline points="550,390 600,360 640,300"/><polyline points="580,440 620,470 600,550"/><polyline points="420,410 490,440"/><polyline points="280,400 370,420 390,480"/><polyline points="90,440 270,430"/><polyline points="120,390 115,540 40,500"/><polyline points="0,430 40,390"/><polyline points="170,550 160,500 200,430"/><polyline points="130,590 230,590 270,620"/><polyline points="120,540 200,560 240,510 275,480"/><polyline points="0,560 60,590 90,590"/>
              <polyline points="300,560 260,690 210,755"/><polyline points="360,690 355,740 400,750"/><polyline points="415,680 490,780 580,830 690,810"/><polyline points="460,650 560,700 630,670 690,620 710,580"/><polyline points="490,630 490,540 520,570"/><polyline points="500,530 560,600 610,610"/><polyline points="600,550 700,580 740,570"/><polyline points="620,480 640,570"/><polyline points="660,480 670,550 720,545"/><polyline points="750,460 730,530 740,600 720,740 690,810"/><polyline points="720,740 780,760 790,850 810,880"/><polyline points="770,700 870,710"/><polyline points="580,830 590,790"/><polyline points="520,915 510,850 550,780"/><polyline points="680,895 690,830"/><polyline points="590,800 600,930"/>
              <polyline points="220,780 290,810 330,840"/><polyline points="180,870 240,790"/><polyline points="280,910 340,1000 300,1000"/><polyline points="240,920 260,1010 310,1080"/><polyline points="400,890 350,960 390,1060 390,1100"/><polyline points="480,890 515,980 540,1020"/><polyline points="600,935 650,950 640,1050 670,1108"/><polyline points="680,900 680,960 720,1070"/><polyline points="770,900 740,960 740,1020"/><polyline points="540,1020 640,960"/><polyline points="70,1000 140,960 170,950"/><polyline points="0,960 75,1010 80,1050 160,1080 330,1090"/><polyline points="200,1160 260,1100 330,1080"/>
              <polyline points="890,1010 990,960 1100,950"/><polyline points="915,1050 1080,1010 1190,1030"/><polyline points="880,870 890,1000"/><polyline points="980,880 990,960"/><polyline points="1060,860 1100,970 1110,1020"/><polyline points="1070,840 1070,780 1120,790"/><polyline points="1140,870 1240,900"/><polyline points="1200,910 1190,1030 1250,1040 1290,1000"/><polyline points="1250,1030 1290,1080 1364,1060"/><polyline points="1000,1130 1080,1110 1120,1120 1180,1100"/><polyline points="1200,1170 1280,1120"/><polyline points="1230,1360 1300,1350 1364,1300"/><polyline points="1130,1330 1100,1300"/><polyline points="1300,780 1310,850 1364,890"/><polyline points="1310,750 1350,780"/>
              <polyline points="880,490 940,400"/><polyline points="1010,500 1100,560"/><polyline points="1100,560 1210,450 1190,420"/><polyline points="950,480 1080,560"/><polyline points="1000,510 1180,440 1300,430"/><polyline points="1100,440 1095,540"/><polyline points="1060,420 1060,340"/><polyline points="830,430 850,475"/><polyline points="800,380 790,450"/><polyline points="1160,260 1160,320"/><polyline points="1110,270 1260,270 1300,370"/><polyline points="1210,390 1364,410"/><polyline points="1270,600 1320,650 1364,660"/><polyline points="990,590 900,600"/><polyline points="940,680 1000,610 1090,600"/>
              <polyline points="600,160 660,190 650,230"/><polyline points="660,90 620,150"/><polyline points="670,70 740,70 750,140 730,200"/><polyline points="840,270 900,260 900,290"/><polyline points="520,1230 600,1220"/><polyline points="480,1250 430,1340 460,1410"/><polyline points="100,1250 180,1160"/><polyline points="190,1350 270,1240"/><polyline points="150,1290 120,1350 150,1410"/><polyline points="640,1410 700,1355"/><polyline points="540,1250 590,1280 590,1330"/><polyline points="690,1250 720,1230 810,1310"/><polyline points="830,1250 760,1290"/><polyline points="500,1400 540,1330"/><polyline points="0,1370 45,1350"/><polyline points="760,1080 760,1140 790,1160 800,1200"/>
            </g>
          </g>
          <!-- main roads -->
          <g fill="none" stroke="#ffffff" stroke-linejoin="round" stroke-linecap="round">
            <g transform="translate(-12 -16) scale(.3333)" stroke-width="6">
              <polyline points="190,48 410,335 555,530 615,620 765,820 880,980 1000,1150 1165,1335 1240,1440"/>
              <polyline points="480,48 560,170 585,230 590,300 565,385 555,470 575,545 620,595 650,605"/>
              <polyline points="535,48 545,110 575,180 605,195 605,260 585,375"/>
              <polyline points="600,190 710,245 785,305 800,340 840,372"/>
              <polyline stroke-width="8" points="615,620 650,605 700,590 770,510 795,460 815,390 840,372 910,355 960,375 1000,400 1130,430 1260,465 1320,500 1390,545"/>
              <polyline points="1390,545 1465,690 1440,790 1410,880 1405,990 1415,1050"/>
              <polyline points="36,155 70,275 140,320 165,360 185,430 265,630 330,695 430,775 510,835 520,880 580,945 640,955 690,950 740,965 800,1000"/>
              <polyline points="36,400 185,430 235,410 300,430 390,462 430,460 475,435"/>
              <polyline points="36,748 100,740 130,705 180,692 230,700 300,692 325,695"/>
              <polyline points="615,620 500,680 450,720 430,780 435,850 420,875 365,890 340,930 262,990 215,1060 140,1120 80,1180 90,1230 97,1290 95,1500"/>
              <polyline stroke-width="8" points="36,1190 80,1195 180,1240 260,1255 320,1290 350,1340 400,1400 450,1422 560,1412 700,1400 800,1370 880,1315"/>
              <polyline points="410,335 430,325 520,345 570,380 630,410 670,490 740,545 800,620 835,690 865,755 920,785 960,850 1030,895 1085,970 1112,1000 1105,1110 1180,1200 1235,1260 1250,1310 1275,1400"/>
              <polyline points="560,500 625,430 655,355 750,355 800,335 860,270 940,210 1080,48"/>
              <polyline stroke-width="8" points="910,355 970,350 1130,190 1230,135 1280,130 1460,60 1560,120"/>
              <polyline points="1110,48 1118,150 1140,240 1190,315 1210,360 1215,410 1290,490"/>
              <polyline points="910,240 920,258 985,265 1060,315 1120,340 1165,368 1250,350 1340,335 1400,340 1470,390 1560,400"/>
              <polyline points="915,250 895,350 898,440 930,610 940,660 920,740 925,785"/>
              <polyline points="800,480 870,560 930,610 1020,640 1060,690 1085,790"/>
              <polyline points="690,950 735,890 765,820 800,785 865,755 890,740 920,738"/>
              <polyline stroke-width="8" points="880,1280 950,1300 1000,1330 1070,1340 1180,1335 1320,1295 1420,1270 1560,1200"/>
              <polyline points="262,990 310,1020 380,1040 420,1045 480,1085 540,1100 600,1160 650,1190 740,1225 850,1255 880,1280 880,1310 960,1340 1070,1340"/>
              <polyline points="340,1325 400,1265 450,1210 490,1160 470,1120 500,1100"/>
              <polyline points="420,1040 470,930 540,930 570,945"/><polyline points="540,1165 570,1165 580,1220 650,1330 680,1500"/>
              <polyline points="1140,860 1250,960 1330,1010 1410,1040"/><polyline points="900,1490 1000,1470 1100,1455 1250,1430 1400,1390 1560,1340"/>
              <polyline points="1320,1090 1360,1105 1380,1200 1385,1280"/><polyline points="1360,1105 1400,1090 1420,1040 1560,1220"/><polyline points="36,1090 80,1180"/><polyline points="240,955 262,990"/>
            </g>
            <g transform="translate(498 -16) scale(.3635 .3333)" stroke-width="6">
              <polyline points="0,90 60,185 130,235 190,350 220,450 235,580 285,750 300,850 335,900"/>
              <polyline points="135,48 120,180 150,270 190,350"/><polyline points="0,400 115,385 190,350 265,270 320,240 480,235"/><polyline points="290,210 320,175 400,220"/>
              <polyline points="180,720 250,630 340,575 420,575 490,610 530,660 560,770 575,860 600,930 660,1060 700,1180 740,1290 780,1400 830,1480"/>
              <polyline points="210,385 280,408 330,408 400,435 490,430 515,370 455,372"/>
              <polyline points="500,48 475,120 475,200 455,360 435,470 435,600 410,1000 395,1240"/>
              <polyline points="455,372 510,362 610,405 700,395 850,345 900,355 1000,315 1110,295"/>
              <polyline stroke-width="8" points="750,95 820,150 890,200 1010,215 1110,275"/>
              <polyline points="640,48 700,130 750,95 765,48"/>
              <polyline points="1110,275 1110,300 1080,390 1060,450 1030,470 820,630 650,750 570,800"/>
              <polyline points="620,100 640,170 560,270 530,360"/><polyline points="1030,470 1060,510 1110,540"/>
              <polyline points="700,400 760,490 780,590 850,690 890,730 960,800"/><polyline points="850,345 860,450 950,575 940,660 890,730"/>
              <polyline stroke-width="8" points="1120,600 1080,650 1040,740 960,820 870,890 800,930 755,980 800,1040 820,1120 905,1195 935,1240 930,1310 960,1490"/>
              <polyline points="755,980 690,1040 575,1100"/><polyline points="870,890 940,880"/>
              <polyline points="905,1195 800,1240 725,1275 620,1320 500,1370 395,1410"/>
              <polyline points="200,970 340,965 510,972 580,955 700,930"/><polyline points="0,800 80,870 200,970 230,1090 255,1160 340,1180"/><polyline points="0,900 75,810 180,720"/>
              <polyline points="0,1240 80,1175 170,1175 220,1200 320,1260 395,1280 520,1240 570,1230"/>
              <polyline points="905,1195 985,1110 1060,1080 1220,970 1364,940"/><polyline points="960,1490 1080,1390 1200,1380 1364,1350"/>
              <polyline points="960,820 1020,1000 1090,1130 1190,1180 1270,1300 1275,1470"/>
              <polyline points="0,1350 100,1370 250,1370 350,1385 420,1415 600,1430 800,1460 960,1460"/>
              <polyline points="60,1490 80,1440 200,1460 430,1440"/><polyline points="1310,540 1364,550"/><polyline points="1320,250 1350,420 1364,500"/>
            </g>
            <g transform="translate(-12 474) scale(.3333 .3444)" stroke-width="6">
              <polyline stroke-width="8" points="36,262 90,262 130,240 175,262 230,300 320,315 430,322 500,275 600,262 800,272 890,245 940,215 1130,205 1180,190"/>
              <polyline points="175,240 380,240 530,230 620,240 690,245"/><polyline points="90,0 150,130 175,180 178,260"/><polyline points="150,130 230,30"/><polyline points="100,5 290,50 560,58 690,78 760,85"/>
              <polyline points="36,355 132,300 175,262"/><polyline points="510,165 700,90 830,45 960,20"/>
              <polyline points="690,0 688,240 725,370 780,480 810,550 770,610 730,710 695,850 680,1000 690,1130 760,1180 860,1240 960,1280"/>
              <polyline points="36,610 220,565 290,510 430,330"/><polyline points="132,300 135,380 180,440 228,500 230,565"/>
              <polyline points="36,690 180,632 310,618 510,615 620,625 740,670 860,735 960,725 1060,710 1160,680 1420,670"/>
              <polyline points="230,565 360,560 430,550 460,500 500,495 560,530"/>
              <polyline stroke-width="8" points="160,1290 210,1230 250,1150 330,1070 430,1000 540,920 600,895 690,850"/>
              <polyline points="690,850 770,780 860,735"/><polyline stroke-width="8" points="400,1020 405,1120 450,1230 455,1290 500,1463"/>
              <polyline points="510,615 515,795 570,840 600,895"/><polyline points="770,610 890,670 910,715 975,700 980,670 1020,660"/>
              <polyline points="965,480 1000,620 1025,660 1110,800 1245,1015 1320,1070"/>
              <polyline points="940,715 920,750 900,830 920,980 975,1100 1000,1280"/><polyline points="955,730 985,900 1020,1040 1090,1065 1180,1130 1245,1190"/>
              <polyline points="1130,400 1100,400 1060,410 900,240 850,180 760,85"/><polyline points="1130,400 1200,560 1240,690 1340,750 1400,800 1480,830 1560,880"/>
              <polyline points="1340,350 1345,440 1360,480 1330,600 1335,670"/><polyline points="725,370 830,380 960,300 1080,250 1180,210"/>
              <polyline points="810,550 880,530 920,500 1040,430"/><polyline points="1240,120 1280,280 1340,350"/>
              <polyline points="1000,110 1150,120 1320,100 1460,60"/><polyline stroke-width="8" points="1280,0 1320,100 1380,180 1530,310"/>
              <polyline points="1020,650 1060,600 1100,560 1200,510 1350,460 1500,400 1560,340"/><polyline points="1060,410 1150,380 1340,340 1450,345 1530,300"/>
              <polyline points="1245,1015 1320,900 1360,770 1440,660 1560,560"/><polyline points="1245,1190 1230,1400 1200,1463"/><polyline points="1080,1275 1170,1120 1245,1015"/>
              <polyline points="160,1400 250,1463"/><polyline points="200,1330 290,1290 360,1275 450,1285 540,1340 540,1400 530,1463"/><polyline points="540,1400 640,1370 800,1340 900,1290 1080,1275 1080,1340 1200,1420"/><polyline points="960,1250 965,1463"/>
              <polyline points="1560,880 1530,1020 1490,1130"/><polyline points="1490,1130 1560,1340"/>
            </g>
            <g transform="translate(498 474) scale(.3635 .3571)" stroke-width="6">
              <polyline points="20,320 60,325 130,390 280,480 300,560 330,600 380,650 415,655 490,630 605,540"/>
              <polyline points="40,500 130,370 210,200 330,215 420,290 550,390 650,470 750,458 850,475 1000,505 1230,465 1364,485"/>
              <polyline points="90,590 40,500 20,400 25,330"/><polyline points="0,665 60,655 90,640 50,760 25,850 0,960"/><polyline points="90,660 120,830 160,910"/>
              <polyline points="75,0 120,40 185,130"/><polyline points="185,0 185,140 210,200 265,340 275,480"/><polyline points="0,130 80,130 190,150 300,40"/>
              <polyline points="330,215 430,235 540,245 640,235 720,310 800,375"/><polyline points="430,110 480,160 580,155 640,235"/><polyline points="580,155 640,80 635,20"/>
              <polyline points="130,720 210,760 215,790 280,910 300,1000 330,1080 400,1105 480,1100 530,1080 600,1105 670,1108 720,1070 800,1090 860,1105 920,1070"/>
              <polyline points="210,755 300,755 360,690 415,655 400,760 450,860 520,915 600,930 640,895 770,900 870,850 950,858 1130,848 1250,795 1364,700"/>
              <polyline points="0,840 90,880 160,915 210,930 280,910 400,890 480,880"/>
              <polyline points="870,850 890,720 930,640 920,570 900,510"/><polyline points="750,460 790,520 870,580 920,600"/>
              <polyline points="860,860 870,960 910,1070 1000,1130 1060,1230 1120,1340 1140,1360"/>
              <polyline points="1110,710 1130,848 1160,960 1190,1040 1195,1160 1160,1200 1130,1330"/><polyline points="980,670 1070,680 1110,710 1230,750 1364,765"/>
              <polyline stroke-width="8" points="1230,630 1230,750 1265,860 1364,915"/>
              <polyline stroke-width="8" points="960,40 1030,110 1040,185 1090,240 1180,330 1210,450 1255,580 1260,640 1364,700"/>
              <polyline points="920,400 1000,350 1070,320 1160,320 1290,290 1364,250"/>
              <polyline points="0,1140 120,1140 170,1155 270,1155 330,1190 400,1185"/><polyline points="415,1105 400,1185 320,1310 260,1410"/>
              <polyline points="170,915 190,1000 170,1190 270,1230 320,1310 380,1410"/><polyline points="600,930 540,1020 575,1095"/>
              <polyline points="600,1105 595,1190 640,1210 690,1250 790,1310 780,1360"/><polyline points="400,1185 480,1250 540,1330 590,1410"/><polyline points="540,1330 640,1210"/>
              <polyline points="600,1330 700,1355 780,1360 930,1345 1000,1360 1140,1365 1200,1360"/><polyline points="820,1345 820,1250 850,1170 920,1090"/>
              <polyline points="0,1210 25,1250 65,1410"/><polyline points="25,1250 100,1250 320,1310"/>
              <polyline points="1095,240 1040,185 1120,110 1140,60 1100,0"/><polyline points="960,40 890,45 830,20 805,40 810,140 820,230 870,290 940,295 975,240 945,190 950,60"/><polyline points="1140,60 1220,105 1335,100 1335,20"/>
              <polyline points="780,0 805,40"/><polyline points="960,0 960,40"/>
            </g>
          </g>
          <!-- place names -->
          <g font-family="Roboto, sans-serif" fill="#a6a6a6" stroke="#f6f6f6" stroke-width="4" stroke-linejoin="round" paint-order="stroke" text-anchor="middle" font-size="26">
            <text x="498" y="502" font-size="39" font-weight="500" fill="#7d7d7d">London</text>
            <text x="855" y="617" font-size="29" font-weight="500" fill="#7d7d7d">Greenwich</text>
            <text x="350" y="268">Hampstead</text>
            <text x="839" y="708">Lewisham</text>
            <text x="268" y="900">Wimbledon</text>
            <text x="912" y="987">Bromley</text>
            <text x="61" y="284" text-anchor="end">Wembley</text>
            <text x="15" y="475" text-anchor="end">Ealing</text>
            <text x="974" y="378" text-anchor="start">East Ham</text>
            <text x="58" y="940" text-anchor="end">Kingston upon</text>
            <text x="23" y="969" text-anchor="end">Thames</text>
            <text x="139" y="818" font-size="22" font-style="italic" text-anchor="end">Richmond Park</text>
            <g font-size="21" letter-spacing="3" fill="#bcbcbe">
              <text x="526" y="263">HOLLOWAY</text>
              <text x="294" y="334">KILBURN</text>
              <text x="579" y="350">ISLINGTON</text>
              <text x="874" y="340">STRATFORD</text>
              <text x="736" y="449">STEPNEY</text>
              <text x="272" y="466">NOTTING</text>
              <text x="272" y="492">HILL</text>
              <text x="290" y="535">KENSINGTON</text>
              <text x="667" y="655">PECKHAM</text>
              <text x="535" y="702">BRIXTON</text>
              <text x="488" y="859">STREATHAM</text>
            </g>
          </g>
        </svg>

        <a href="#" aria-label="Mapbox" class="absolute bottom-2 left-3">
          <svg class="h-12 w-[180px]" viewBox="0 0 180 48">
            <circle cx="23" cy="21" r="20" fill="#fff" fill-opacity=".9" stroke="#a6a6a6" stroke-width="3"/>
            <path fill="#a6a6a6" d="M14 30V20A10.500 10.500 0 1 1 24.500 30ZM26 12l-1.800 5.200L19 19l5.200 1.800L26 26l1.800-5.200L33 19l-5.200-1.800Z" fill-rule="evenodd"/>
            <text x="49" y="31" font-family="Lato, sans-serif" font-weight="900" font-size="34" fill="#fff" stroke="#a6a6a6" stroke-width="6" stroke-linejoin="round" paint-order="stroke">mapbox</text>
          </svg>
        </a>

        <div class="absolute top-5 right-5 flex flex-col gap-5">
          <div class="flex flex-col divide-y-2 divide-[#ddd] overflow-hidden rounded-2xl bg-white shadow-[0_0_0_4px_rgba(0,0,0,0.1)]">
            <button type="button" aria-label="Zoom in" class="h-[66px] w-16"><svg class="size-16" viewBox="0 0 29 29" fill="#333"><path d="M14.500 8.500c-.75 0-1.500.75-1.500 1.500v3h-3c-.75 0-1.500.75-1.500 1.500S9.250 16 10 16h3v3c0 .75.75 1.500 1.500 1.500S16 19.750 16 19v-3h3c.75 0 1.500-.75 1.500-1.500S19.750 13 19 13h-3v-3c0-.75-.75-1.500-1.500-1.500z"/></svg></button>
            <button type="button" aria-label="Zoom out" class="size-16"><svg class="size-16" viewBox="0 0 29 29" fill="#333"><path d="M10 13c-.75 0-1.500.75-1.500 1.500S9.250 16 10 16h9c.75 0 1.500-.75 1.500-1.500S19.750 13 19 13h-9z"/></svg></button>
            <button type="button" aria-label="Reset bearing" class="h-[62px] w-16"><svg class="size-16" viewBox="0 0 29 29" fill="#333"><path d="m10.500 14 4-8 4 8h-8z"/><path d="m10.500 16 4 8 4-8h-8z" fill="#ccc"/></svg></button>
          </div>
          <button type="button" aria-label="Fullscreen" class="size-16 rounded-2xl bg-white shadow-[0_0_0_4px_rgba(0,0,0,0.1)]"><svg class="size-16" viewBox="0 0 29 29" fill="#333"><path d="M24 16v5.500c0 1.750-.75 2.500-2.500 2.500H16v-1l3-1.500-4-5.500 1-1 5.500 4 1.500-3h1zM6 16l1.500 3 5.500-4 1 1-4 5.500 3 1.500v1H7.500C5.750 24 5 23.250 5 21.500V16h1zm7-11v1l-3 1.500 4 5.500-1 1-5.500-4L6 13H5V7.500C5 5.750 5.750 5 7.500 5H13zm11 2.500c0-1.750-.75-2.500-2.500-2.500H16v1l3 1.500-4 5.500 1 1 5.500-4 1.500 3h1V7.500z"/></svg></button>
        </div>

        <button type="button" aria-label="Map attribution" class="absolute right-5 bottom-5 size-12 rounded-full bg-white"><svg class="size-12" viewBox="0 0 20 20" fill="#0a0a0a" fill-rule="evenodd"><path d="M4 10a6 6 0 1 0 12 0 6 6 0 1 0-12 0m5-3a1 1 0 1 0 2 0 1 1 0 1 0-2 0m0 3a1 1 0 1 1 2 0v3a1 1 0 1 1-2 0"/></svg></button>
      </div>

      <div class="flex flex-col items-center border-t-2 border-[#e2e2e2] px-8 pt-24 pb-24 text-center">
        <svg class="size-16" viewBox="0 0 24 24" fill="none" stroke="currentColor" stroke-width="2" stroke-linecap="round" stroke-linejoin="round"><path d="M20 10c0 4.993-5.539 10.193-7.399 11.799a1 1 0 0 1-1.202 0C9.539 20.193 4 14.993 4 10a8 8 0 0 1 16 0"/><circle cx="12" cy="10" r="3"/></svg>
        <h3 class="mt-9 text-4xl leading-12 text-[#0a0a0a] [-webkit-text-stroke:1px_rgb(10_10_10/0.6)]">Address information will appear here</h3>
        <p class="mt-3">Fill out the form or search for an address</p>
      </div>
    </section>
  </main>
</div>

<script>
  // Turn each road and river polyline into a smooth curve through its points.
  document.querySelectorAll('polyline').forEach(function (line) {
    var p = line.getAttribute('points').trim().split(/\s+/).map(function (s) { return s.split(',').map(Number); });
    var d = 'M' + p[0];
    for (var i = 0; i < p.length - 1; i++) {
      var a = p[i - 1] || p[i], b = p[i], c = p[i + 1], e = p[i + 2] || c;
      d += 'C' + [b[0] + (c[0] - a[0]) / 6, b[1] + (c[1] - a[1]) / 6, c[0] - (e[0] - b[0]) / 6, c[1] - (e[1] - b[1]) / 6, c[0], c[1]].join(' ');
    }
    var path = document.createElementNS('http://www.w3.org/2000/svg', 'path');
    path.setAttribute('d', d);
    if (line.hasAttribute('stroke-width')) path.setAttribute('stroke-width', line.getAttribute('stroke-width'));
    line.replaceWith(path);
  });
</script>
</body>
</html>
